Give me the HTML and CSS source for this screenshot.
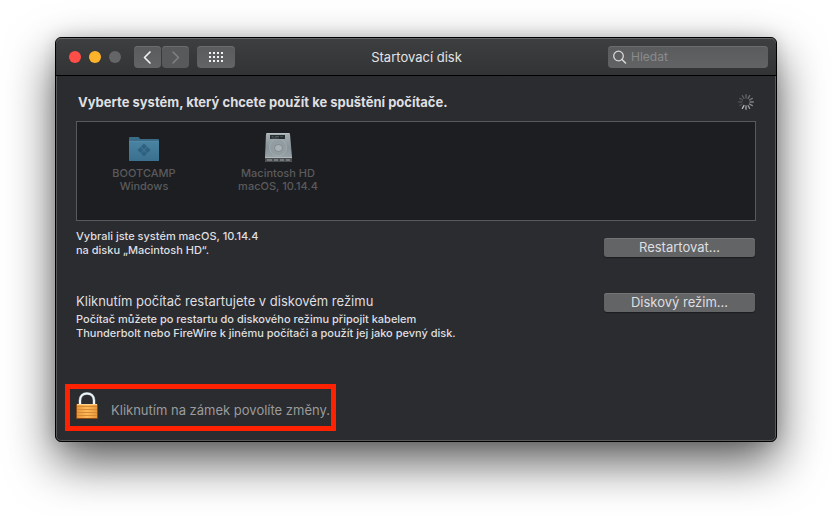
FILE: index.html
```html
<!DOCTYPE html>
<html lang="cs">
<head>
<meta charset="utf-8">
<meta name="viewport" content="width=device-width, initial-scale=1">
<title>Startovací disk</title>
<link rel="stylesheet" href="styles.css">
</head>
<body>
<div class="window">
  <header class="toolbar">
    <div class="toolbar-side">
      <div class="lights">
        <button class="light light-close" aria-label="Zavřít"></button>
        <button class="light light-min" aria-label="Minimalizovat"></button>
        <button class="light light-zoom" aria-label="Zvětšit" disabled></button>
      </div>
      <div class="nav">
        <button class="tool" aria-label="Zpět"><svg width="27" height="22" viewBox="0 0 27 22"><path d="M16 6 L10.500 11.500 L16 17" fill="none" stroke="#f0f0f0" stroke-width="1.700" stroke-linecap="round" stroke-linejoin="round"/></svg></button>
        <button class="tool" aria-label="Vpřed" disabled><svg width="27" height="22" viewBox="0 0 27 22"><path d="M11 6 L16.500 11.500 L11 17" fill="none" stroke="#808183" stroke-width="1.500" stroke-linecap="round" stroke-linejoin="round"/></svg></button>
      </div>
      <button class="tool tool-grid" aria-label="Zobrazit vše"><svg width="38" height="22" viewBox="0 0 38 22"><path d="M12 7h2M16 7h2M20 7h2M24 7h2M12 11h2M16 11h2M20 11h2M24 11h2M12 15h2M16 15h2M20 15h2M24 15h2" stroke="#f2f2f2" stroke-width="2"/></svg></button>
    </div>
    <h1 class="title">Startovací disk</h1>
    <div class="toolbar-side toolbar-end">
      <label class="search">
        <svg width="14" height="14" viewBox="0 0 14 14"><circle cx="5.500" cy="6" r="4.800" fill="none" stroke="#d8d8d9" stroke-width="1.300"/><path d="M9 9.500L12.500 13" stroke="#d8d8d9" stroke-width="1.500" stroke-linecap="round"/></svg>
        <input type="search" placeholder="Hledat" aria-label="Hledat">
      </label>
    </div>
  </header>
  <main class="content">
    <div class="heading-row">
      <h2 class="heading">Vyberte systém, který chcete použít ke spuštění počítače.</h2>
      <svg class="spinner" width="16" height="16" viewBox="-8 -8 16 16" stroke-width="1.300" stroke-linecap="round">
        <path d="M0-4V-7.300" stroke="#66676a"/>
        <path d="M0-4V-7.300" stroke="#707174" transform="rotate(30)"/>
        <path d="M0-4V-7.300" stroke="#77787a" transform="rotate(60)"/>
        <path d="M0-4V-7.300" stroke="#808183" transform="rotate(90)"/>
        <path d="M0-4V-7.300" stroke="#8b8c8e" transform="rotate(120)"/>
        <path d="M0-4V-7.300" stroke="#98999b" transform="rotate(150)"/>
        <path d="M0-4V-7.300" stroke="#a8a9aa" transform="rotate(180)"/>
        <path d="M0-4V-7.300" stroke="#c0c0c1" transform="rotate(210)"/>
        <path d="M0-4V-7.300" stroke="#47484b" transform="rotate(240)"/>
        <path d="M0-4V-7.300" stroke="#4d4e51" transform="rotate(270)"/>
        <path d="M0-4V-7.300" stroke="#55565a" transform="rotate(300)"/>
        <path d="M0-4V-7.300" stroke="#5e5f62" transform="rotate(330)"/>
      </svg>
    </div>
    <div class="disks">
      <button class="disk" disabled>
        <svg width="32" height="32" viewBox="0 0 32 32">
          <defs><linearGradient id="folder" x1="0" y1="0" x2="0" y2="1"><stop offset="0" stop-color="#4a83a2"/><stop offset="1" stop-color="#3b708f"/></linearGradient></defs>
          <path d="M1 5q0-1 1-1h8q1 0 1.500 1l.5 1h18q1 0 1 1v20q0 1-1 1H2q-1 0-1-1z" fill="#3a6c88"/>
          <path d="M1 8h30v19q0 1-1 1H2q-1 0-1-1z" fill="url(#folder)"/>
          <path d="M1 8.500h30" stroke="#5289a8"/>
          <path d="M16 10.500l3 3-3 3-3-3zM12.500 14l3 3-3 3-3-3zM19.500 14l3 3-3 3-3-3zM16 17.500l3 3-3 3-3-3z" fill="#2f617e"/>
        </svg>
        <span>BOOTCAMP<br>Windows</span>
      </button>
      <button class="disk" disabled>
        <svg width="32" height="32" viewBox="0 0 32 32">
          <defs><linearGradient id="drive" x1="0" y1="0" x2="0" y2="1"><stop offset="0" stop-color="#a7afb3"/><stop offset=".5" stop-color="#87949a"/><stop offset="1" stop-color="#a0a8ac"/></linearGradient></defs>
          <path d="M5 0h22q1 0 1 1l2 23v4q0 1-1 1H4q-1 0-1-1v-4L4 1q0-1 1-1z" fill="url(#drive)"/>
          <path d="M5 .5h22" stroke="#b8bfc2"/>
          <circle cx="16" cy="14.500" r="8.500" fill="#929da2" stroke="#a4aeb2" stroke-width=".8"/>
          <ellipse cx="16.500" cy="15" rx="4" ry="3.500" fill="#a9b3b7" stroke="#748086" stroke-width=".7"/>
          <path d="M8 2h15v4H8z" fill="#282d30"/>
          <path d="M9.500 3.500h2M13 3.500h4M18.500 3.500h2M9.500 5h7" stroke="#50595e"/>
          <path d="M3 25h27v3q0 1-1 1H4q-1 0-1-1z" fill="#4a4e50"/>
          <path d="M5 26h5v2H5zM12 26h4v2h-4zM18 26h4v2h-4zM24 26h4v2h-4z" fill="#74797b"/>
          <path d="M3 24.500h27" stroke="#b1b9bc"/>
        </svg>
        <span>Macintosh HD<br>macOS, 10.14.4</span>
      </button>
    </div>
    <section class="row row-restart">
      <p class="small">Vybrali jste systém macOS, 10.14.4<br>na disku „Macintosh HD“.</p>
      <button class="push">Restartovat…</button>
    </section>
    <section class="row row-target">
      <div>
        <h3 class="subheading">Kliknutím počítač restartujete v diskovém režimu</h3>
        <p class="small">Počítač můžete po restartu do diskového režimu připojit kabelem<br>Thunderbolt nebo FireWire k jinému počítači a použít jej jako pevný disk.</p>
      </div>
      <button class="push">Diskový režim…</button>
    </section>
    <button class="lock">
      <svg width="22" height="28" viewBox="0 0 22 28">
        <defs><linearGradient id="brass" x1="0" y1="0" x2="1" y2="0"><stop offset="0" stop-color="#e8963a"/><stop offset=".5" stop-color="#ffb95a"/><stop offset="1" stop-color="#e8963a"/></linearGradient></defs>
        <path d="M4 13V8.500C4 4 7 1.500 11 1.500S18 4 18 8.500V13" fill="none" stroke="#6f7d85" stroke-width="3"/>
        <path d="M4 13V8.500C4 4 7 1.500 11 1.500S18 4 18 8.500V13" fill="none" stroke="#eef5f8" stroke-width="2"/>
        <rect x="0" y="12" width="22" height="15" rx="1" fill="#8d4a13"/>
        <rect x="1" y="12" width="20" height="14" fill="url(#brass)"/>
        <path d="M1 14.500h20M1 17.500h20M1 20.500h20M1 23.500h20" stroke="#d58a34"/>
        <path d="M1 12.500h20" stroke="#ffd28a"/>
      </svg>
      <span>Kliknutím na zámek povolíte změny.</span>
    </button>
  </main>
</div>
</body>
</html>
```
FILE: styles.css
```css
* {
  box-sizing: border-box;
}

body {
  margin: 0;
  padding: 37px 55px 73px;
  background: #fff;
  color: #dfdfe0;
  font-family: Inter, "Liberation Sans", sans-serif;
  font-size: 12px;
}

h1, h2, h3, p {
  margin: 0;
}

button, input {
  font: inherit;
  color: inherit;
}

button {
  padding: 0;
  border: 0;
  background: none;
}

svg {
  display: block;
  flex: none;
}

.window {
  overflow: hidden;
  border: 1px solid #000;
  border-radius: 6px;
  background: #2b2c2f;
  box-shadow: 0 20px 48px rgba(0, 0, 0, .65), 0 0 16px rgba(0, 0, 0, .15), inset 0 0 0 1px #58595b;
}

.toolbar {
  display: flex;
  align-items: center;
  height: 38px;
  padding: 0 8px 0 13px;
  border-bottom: 1px solid #000;
  border-radius: 5px 5px 0 0;
  background: linear-gradient(#3e3f41, #323335);
  box-shadow: inset 0 1px #666769;
}

.toolbar-side {
  display: flex;
  flex: 1;
  align-items: center;
}

.toolbar-end {
  justify-content: flex-end;
}

.lights {
  display: flex;
  gap: 8px;
  margin-right: 13px;
}

.light {
  width: 12px;
  height: 12px;
  border-radius: 50%;
}

.light-close { background: #ff4e48; }
.light-min { background: #fdb42b; }
.light-zoom { background: #646567; }

.nav {
  display: flex;
  gap: 1px;
  margin-right: 8px;
}

.tool {
  border-radius: 4px;
  background: linear-gradient(#5a5b5d, #636466);
  box-shadow: inset 0 1px #6b6c6e;
}

.tool:disabled {
  background: #58595b;
}

.title {
  padding-right: 4px;
  color: #e4e4e5;
  font-size: 13px;
  font-weight: 400;
}

.search {
  display: flex;
  align-items: center;
  gap: 4px;
  width: 160px;
  height: 22px;
  padding: 0 5px;
  border-radius: 4px;
  background: linear-gradient(#5a5b5d, #626365);
  box-shadow: inset 0 1px #6b6c6e;
}

.search input {
  min-width: 0;
  width: 100%;
  padding: 0;
  border: 0;
  outline: 0;
  background: none;
}

.search input::placeholder {
  color: #8a8b8d;
  opacity: 1;
}

.content {
  padding: 18px 20px 10px;
}

.heading-row {
  display: flex;
  align-items: center;
  justify-content: space-between;
  height: 16px;
  margin: 0 2px 11px;
}

.heading {
  font-size: 13px;
  font-weight: 700;
}

.disks {
  display: flex;
  height: 100px;
  padding: 11px 0 0;
  border: 1px solid #59595b;
  background: #1d1e21;
}

.disk {
  display: flex;
  flex-direction: column;
  align-items: center;
  gap: 2px;
  width: 134px;
  color: #5a5b5d;
  font-size: 11px;
  font-weight: 500;
  line-height: 13px;
}

.row {
  display: flex;
  align-items: flex-start;
  justify-content: space-between;
}

.row-restart {
  margin-top: 8px;
}

.row-target {
  margin-top: 36px;
}

.small {
  font-size: 11px;
  font-weight: 500;
  line-height: 14px;
}

.subheading {
  margin-bottom: 2px;
  font-size: 13px;
  font-weight: 400;
  line-height: 17px;
}

.push {
  width: 151px;
  height: 19px;
  margin: 9px 1px 0 0;
  border-radius: 3px;
  background: #636466;
  box-shadow: inset 0 1px #737476, 0 1px 1px #1c1d1f;
  font-size: 13px;
  line-height: 19px;
}

.row-target .push {
  margin-top: 0;
}

.lock {
  display: flex;
  align-items: flex-end;
  gap: 13px;
  margin: 44px 0 0 -11px;
  padding: 3px 1px 6px 6px;
  border: 5px solid #fe2200;
  color: #9a9b9d;
  font-size: 13px;
  line-height: 20px;
}
```
